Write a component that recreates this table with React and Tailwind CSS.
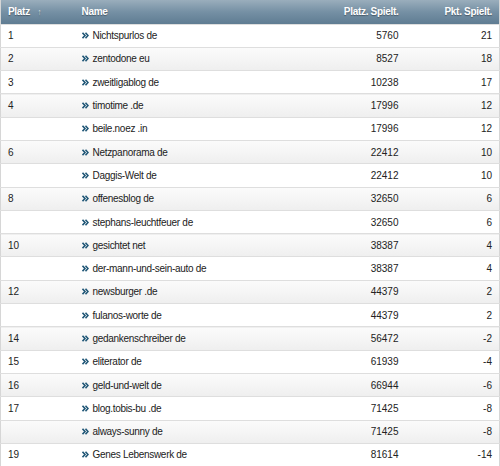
import React from 'react';

const ROWS = [
  ['1', 'Nichtspurlos de', '5760', '21'],
  ['2', 'zentodone eu', '8527', '18'],
  ['3', 'zweitligablog de', '10238', '17'],
  ['4', 'timotime .de', '17996', '12'],
  ['', 'beile.noez .in', '17996', '12'],
  ['6', 'Netzpanorama de', '22412', '10'],
  ['', 'Daggis-Welt de', '22412', '10'],
  ['8', 'offenesblog de', '32650', '6'],
  ['', 'stephans-leuchtfeuer de', '32650', '6'],
  ['10', 'gesichtet net', '38387', '4'],
  ['', 'der-mann-und-sein-auto de', '38387', '4'],
  ['12', 'newsburger .de', '44379', '2'],
  ['', 'fulanos-worte de', '44379', '2'],
  ['14', 'gedankenschreiber de', '56472', '-2'],
  ['15', 'eliterator de', '61939', '-4'],
  ['16', 'geld-und-welt de', '66944', '-6'],
  ['17', 'blog.tobis-bu .de', '71425', '-8'],
  ['', 'always-sunny de', '71425', '-8'],
  ['19', 'Genes Lebenswerk de', '81614', '-14'],
];

function Chevron() {
  return (
    <svg width="7" height="7" viewBox="0 0 7 7" className="mr-[4px] shrink-0">
      <path d="M0.5 0.8 L3 3.5 L0.5 6.2 M3.5 0.8 L6 3.5 L3.5 6.2" fill="none" stroke="#1f5676" strokeWidth="1.6" />
    </svg>
  );
}

export default function App() {
  return (
    <div className="w-[500px] h-[466px] bg-white font-['Liberation_Sans',Arial,sans-serif] text-[10px] text-[#222]">
      <table className="w-full border-collapse table-fixed border-x border-b border-[#d6d6d6]">
        <colgroup>
          <col className="w-[74px]" />
          <col className="w-[230px]" />
          <col className="w-[101px]" />
          <col />
        </colgroup>
        <thead>
          <tr className="h-[24px] bg-gradient-to-b from-[#9aaebc] via-[#7590a4] to-[#5f7c92] text-white font-bold tracking-[-0.3px] [text-shadow:0_1px_1px_rgba(0,0,0,0.35)]">
            <th className="text-left pl-[7px] font-bold">
              Platz <span className="ml-[5px] text-[9px] text-[#cfd8df]">↑</span>
            </th>
            <th className="text-left pl-[7px] font-bold">Name</th>
            <th className="text-right pr-[7px] font-bold">Platz. Spielt.</th>
            <th className="text-right pr-[7px] font-bold">Pkt. Spielt.</th>
          </tr>
        </thead>
        <tbody>
          {ROWS.map((r, i) => (
            <tr
              key={i}
              className={`h-[23.3px] border-t border-[#dedede] ${
                i % 2 === 1 ? 'bg-gradient-to-b from-[#fbfbfb] to-[#efefef]' : 'bg-white'
              }`}
            >
              <td className="pl-[7px]">{r[0]}</td>
              <td className="pl-[7px]">
                <span className="flex items-center tracking-[-0.3px]">
                  <Chevron />
                  {r[1]}
                </span>
              </td>
              <td className="text-right pr-[7px]">{r[2]}</td>
              <td className="text-right pr-[7px]">{r[3]}</td>
            </tr>
          ))}
        </tbody>
      </table>
    </div>
  );
}
